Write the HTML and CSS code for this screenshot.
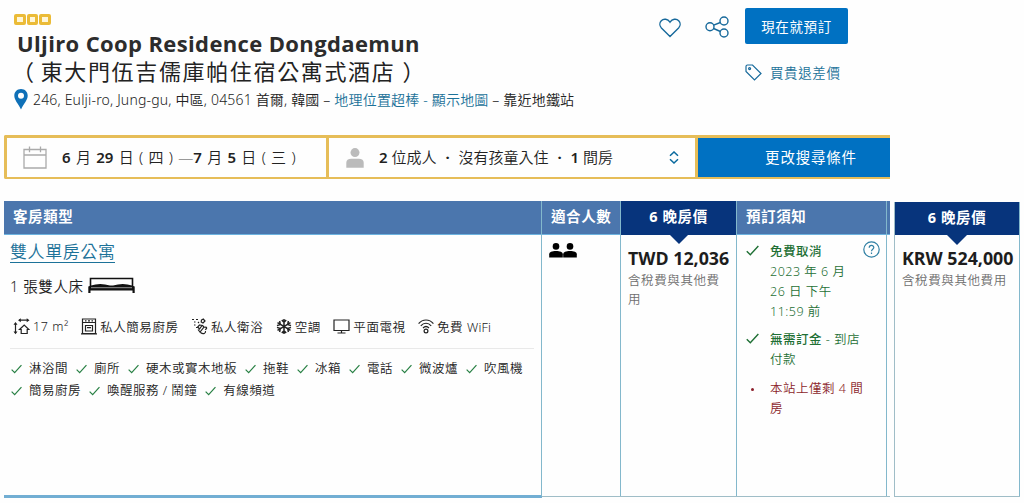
FILE: index.html
```
<!DOCTYPE html>
<html lang="zh-TW">
<head>
    <meta charset="UTF-8">
    <meta name="viewport" content="width=device-width, initial-scale=1.0">
    <title>Uljiro Coop Residence Dongdaemun</title>
    <link rel="stylesheet" href="styles.css">
</head>
<body>
    <svg width="0" height="0" class="symbols">
        <symbol id="check" viewBox="0 0 12 10"><path d="M.7 5.6 4 9 11.4.8" fill="none" stroke="currentColor" stroke-width="1.3"/></symbol>
        <symbol id="person" viewBox="0 0 14 15"><circle cx="7" cy="3.4" r="3.3"/><path d="M.2 14.6v-3.4C.2 9.2 3 8 7 8s6.800 1.200 6.800 3.200v3.400z"/></symbol>
    </svg>

    <!-- Header -->
    <header class="header">
        <div class="hotel">
            <div class="rating">
                <span></span><span></span><span></span>
            </div>
            <h1 class="hotel-name">Uljiro Coop Residence Dongdaemun</h1>
            <div class="hotel-name-zh"><span class="paren-l">（</span>東大門伍吉儒庫帕住宿公寓式酒店<span class="paren-r">）</span></div>
            <div class="address">
                <svg class="pin" width="14" height="21" viewBox="0 0 14 21"><path fill="#0f70b7" fill-rule="evenodd" d="M7 0C3 0 .3 2.900.3 6.800.3 11 4 14.500 7 20.500 10 14.500 13.700 11 13.700 6.800 13.700 2.900 11 0 7 0zm0 3.800a3 3 0 1 1 0 6 3 3 0 0 1 0-6z"/></svg>
                <span>246, Eulji-ro, Jung-gu, </span><span>中區, 04561 首爾, 韓國 – </span><a>地理位置超棒</a><a> - </a><a>顯示地圖</a><span> – 靠近地鐵站</span>
            </div>
        </div>
        <div class="actions">
            <div class="action-row">
                <svg class="heart" width="22" height="20" viewBox="0 0 22 20"><path d="M11 18.500 2.400 10C.3 7.800.5 4.600 2.300 2.700 4.700.3 8.700.9 11 4.200 13.300.9 17.300.3 19.700 2.700c1.800 1.900 2 5.100-.1 7.300z"/></svg>
                <svg class="share" width="24" height="22" viewBox="0 0 24 22"><circle cx="5" cy="10.700" r="4"/><circle cx="19" cy="5" r="4"/><circle cx="19" cy="17" r="4"/><path d="m8.700 9.200 6.600-2.700M8.600 12.500l6.800 3"/></svg>
                <button class="book-btn">現在就預訂</button>
            </div>
            <div class="price-match">
                <svg width="17" height="17" viewBox="0 0 17 17"><path d="M1 2.500Q1 1 2.500 1h5L16 9.500 9.500 16 1 7.500z"/><circle cx="4.600" cy="4.600" r="1"/></svg>
                <a>買貴退差價</a>
            </div>
        </div>
    </header>

    <!-- Search bar -->
    <div class="search">
        <div class="search-dates">
            <svg width="24" height="23" viewBox="0 0 24 23"><path d="M1 3.500h22V22H1zM1 9h22M6.500.5v5.800M17.500.5v5.800" fill="none" stroke="#aaa" stroke-width="1.300"/></svg>
            <div class="dates"><b>6</b> 月 <b>29</b> 日 ( 四 ) <i>—</i><b>7</b> 月 <b>5</b> 日 ( 三 )</div>
        </div>
        <div class="search-guests">
            <svg width="18" height="20" viewBox="0 0 18 20" fill="#bbb"><circle cx="9" cy="4.600" r="4.500"/><path d="M.3 19.800v-5q0-4 5-4h7.400q5 0 5 4v5z"/></svg>
            <div class="guests"><b>2</b> 位成人 <i>·</i> 沒有孩童入住 <i>·</i> <b>1</b> 間房</div>
            <svg class="updown" width="10" height="13" viewBox="0 0 10 13"><path d="M1 4.800 5 1l4 3.800M1 8.200 5 12l4-3.800" fill="none" stroke="#0a6a9e" stroke-width="1.500"/></svg>
        </div>
        <button class="search-btn">更改搜尋條件</button>
    </div>

    <!-- Room tables -->
    <main class="rooms">
        <div class="table">
            <div class="col col-room">
                <div class="th">客房類型</div>
                <div class="room">
                    <a class="room-name">雙人單房公寓</a>
                    <div class="beds">
                        <span>1 張雙人床</span>
                        <svg width="47" height="17" viewBox="0 0 47 17"><path d="M2.500 9V1.500h42V9" fill="none" stroke="#111" stroke-width="1.600"/><path d="M.3 9.500 3 8.500q9-3 19 0h3q10-3 19 0l2.700 1V16H44.500v-2.500H2.500V16H.3z" fill="#111"/><path d="M3 10.700h41" stroke="#ccc" stroke-width=".7"/></svg>
                    </div>
                    <div class="facilities">
                        <div class="facility">
                            <svg width="17" height="17" viewBox="0 0 17 17"><path d="M6 2.200h9M2.500 5v10M6.500 11.500l4.700-4.500 4.700 4.500h-1.700v4h-6v-4z"/><path class="solid" d="M7.800.2v4L5 2.200zM13.700.2v4l2.800-2zM.5 6.800h4L2.500 4zM.5 13.500h4l-2 2.800z"/></svg>
                            <span>17 m²</span>
                        </div>
                        <div class="facility">
                            <svg width="16" height="17" viewBox="0 0 16 17"><path d="M1.500 1h13v14.500h-13zM1.500 4.500h13M4.500 7.500h7v5.500h-7zM6 9.700h4M4 2.800h1.500M7 2.800h2M10.500 2.800H12M0 15.800h16"/></svg>
                            <span>私人簡易廚房</span>
                        </div>
                        <div class="facility">
                            <svg width="17" height="17" viewBox="0 0 17 17"><path d="M1 1.500h2M5 1.500h2M3 4h1.500M3 7h1.500M5 9.500h1.500M7 4l1 1M10.500 2l1.800-1 1.700 2-2 2-1.800-1zM8.500 7l2.500.5-2.500 3.500-1.800-2zM11.500 7.500l1.500 1.500-4 5-2-2.500M13.500 9.500c2.500-1.500 3 1.500.5 2M9.500 14.500c3 2.500 5.500.5 5-1.500"/></svg>
                            <span>私人衛浴</span>
                        </div>
                        <div class="facility">
                            <svg width="16" height="17" viewBox="0 0 16 17"><path d="M8 1v15M1.500 4.700l13 7.600M14.500 4.700l-13 7.600M5.800 2 8 4.300 10.200 2M5.800 15 8 12.700l2.200 2.300M1 7.600l3.300-1.200L3.600 3M15 9.400l-3.300 1.200.7 3.400M15 7.600l-3.300-1.200.7-3.400M1 9.400l3.300 1.200-.7 3.400" stroke-width="1.500"/></svg>
                            <span>空調</span>
                        </div>
                        <div class="facility">
                            <svg width="17" height="15" viewBox="0 0 17 15"><path d="M1 1h15v10.500H1zM8.500 11.500V14M4.500 14h8"/></svg>
                            <span>平面電視</span>
                        </div>
                        <div class="facility">
                            <svg width="16" height="15" viewBox="0 0 16 15"><path d="M.6 4.600c4-4.800 10.800-4.800 14.800 0M2.800 6.800c3-3.400 7.400-3.400 10.400 0M5 9c2-2 4-2 6 0"/><circle cx="8" cy="12" r="1.900"/></svg>
                            <span>免費 <em>WiFi</em></span>
                        </div>
                    </div>
                    <ul class="amenities">
                        <li><svg><use href="#check"/></svg>淋浴間</li>
                        <li><svg><use href="#check"/></svg>廁所</li>
                        <li><svg><use href="#check"/></svg>硬木或實木地板</li>
                        <li><svg><use href="#check"/></svg>拖鞋</li>
                        <li><svg><use href="#check"/></svg>冰箱</li>
                        <li><svg><use href="#check"/></svg>電話</li>
                        <li><svg><use href="#check"/></svg>微波爐</li>
                        <li><svg><use href="#check"/></svg>吹風機</li>
                        <li><svg><use href="#check"/></svg>簡易廚房</li>
                        <li><svg><use href="#check"/></svg>喚醒服務 / 鬧鐘</li>
                        <li><svg><use href="#check"/></svg>有線頻道</li>
                    </ul>
                </div>
            </div>
            <div class="col col-guests">
                <div class="th">適合人數</div>
                <div class="people">
                    <svg width="14" height="15"><use href="#person"/></svg>
                    <svg width="14" height="15"><use href="#person"/></svg>
                </div>
            </div>
            <div class="col col-price">
                <div class="th th-price">6 晚房價</div>
                <div class="price">TWD 12,036</div>
                <div class="tax">含稅費與其他費用</div>
            </div>
            <div class="col col-notes">
                <div class="th">預訂須知</div>
                <ul class="notes">
                    <li class="note">
                        <svg><use href="#check"/></svg>
                        <div><b>免費取消</b><br>2023 年 6 月<br>26 日 下午<br>11:59 前</div>
                        <svg class="help" viewBox="0 0 17 17"><circle cx="8.500" cy="8.500" r="7.700"/><path d="M6.200 6.700c0-3 4.600-3 4.600-.2 0 1.700-2.300 1.700-2.300 3.700M8.500 11.500V13"/></svg>
                    </li>
                    <li class="note">
                        <svg><use href="#check"/></svg>
                        <div><b>無需訂金</b> - 到店<br>付款</div>
                    </li>
                    <li class="note note-red">
                        <span class="dot"></span>
                        <div>本站上僅剩 4 間<br>房</div>
                    </li>
                </ul>
            </div>
            <div class="col col-edge"><div class="th"></div></div>
        </div>

        <div class="table table-krw">
            <div class="col col-price">
                <div class="th th-price">6 晚房價</div>
                <div class="price">KRW 524,000</div>
                <div class="tax">含稅費與其他費用</div>
            </div>
        </div>
    </main>
</body>
</html>
```
FILE: styles.css
```
* {
    box-sizing: border-box;
}

body {
    margin: 0;
    width: 1024px;
    height: 503px;
    overflow: hidden;
    background: #fefefe;
    color: #222;
    font-family: "Noto Sans", "Noto Sans CJK TC", sans-serif;
    font-size: 12.5px;
    font-weight: 350;
    white-space: nowrap;
}

svg {
    flex: none;
    display: block;
}

.symbols {
    position: absolute;
}

button {
    border: 0;
    padding: 0;
    font-family: inherit;
    color: #fff;
    background: #0071c2;
}

ul {
    list-style: none;
    margin: 0;
    padding: 0;
}

a {
    color: #1c7299;
}

/* Header */
.header {
    display: flex;
    height: 135px;
}

.hotel {
    width: 658px;
    padding: 14px 0 0 14px;
}

.rating {
    display: flex;
    gap: 1px;
    height: 11px;
}

.rating span {
    width: 11.5px;
    height: 11px;
    border: 3.5px solid #ebbb37;
    border-radius: 2px;
    background: #fff6d8;
}

.hotel-name {
    margin: 4px 0 0 3px;
    font-family: "Open Sans", sans-serif;
    font-size: 22px;
    line-height: 28px;
    letter-spacing: .37px;
    color: #2c2c2c;
}

.hotel-name-zh {
    margin-left: 4px;
    font-size: 22px;
    font-weight: 400;
    line-height: 28px;
    letter-spacing: 1.65px;
}

.paren-l {
    margin: 0 5px 0 -6px;
}

.paren-r {
    margin-left: 7px;
}

.address {
    display: flex;
    align-items: center;
    margin-top: 3px;
    height: 22px;
    font-size: 14px;
    letter-spacing: .18px;
    white-space: pre;
}

.pin {
    margin-right: 5px;
}

.actions {
    padding-top: 8px;
}

.action-row {
    display: flex;
    height: 37px;
}

.heart,
.share,
.price-match svg {
    fill: none;
    stroke: #17699b;
    stroke-width: 1.4;
}

.heart {
    margin: 10px 24px 0 1px;
}

.share {
    margin: 8px 16px 0 0;
}

.book-btn {
    width: 103px;
    height: 36px;
    border-radius: 2px;
    font-size: 13.5px;
    letter-spacing: .6px;
}

.price-match {
    display: flex;
    align-items: center;
    gap: 8px;
    margin: 16px 0 0 87px;
    height: 22px;
    font-size: 13.5px;
    letter-spacing: .6px;
}

.price-match svg {
    stroke-width: 1.2;
}

/* Search bar */
.search {
    display: flex;
    width: 886px;
    height: 44px;
    margin-left: 4px;
    border: solid #e6bd58;
    border-width: 3px 0 2px 3px;
    border-radius: 2px 0 0 2px;
    font-size: 15px;
}

.search-dates,
.search-guests {
    display: flex;
    align-items: center;
    border-right: 3px solid #e6bd58;
}

.search-dates {
    width: 322px;
    padding-left: 16px;
}

.search-guests {
    width: 369px;
    padding: 0 16px 0 17px;
}

.search b {
    font-weight: 600;
}

.dates,
.guests {
    margin: -2px 0 0 15px;
}

.dates {
    word-spacing: 1.4px;
}

.search i {
    font-style: normal;
}

.dates i {
    color: #999;
}

.guests i {
    margin: 0 5px;
    font-weight: 700;
}

.updown {
    margin-left: auto;
}

.search-btn {
    flex: 1;
    padding: 0 0 2px 34px;
    font-size: 14.5px;
    letter-spacing: .8px;
}

/* Room tables */
.rooms {
    display: flex;
    align-items: flex-start;
    gap: 4px;
    padding: 22px 0 0 4px;
}

.table {
    display: flex;
    height: 296px;
    border-bottom: 1px solid #9fbdc7;
}

.col {
    border-right: 1px solid #83b8cc;
}

.th {
    height: 34px;
    padding-left: 9px;
    border-bottom: 1px solid #6db3df;
    background: #4b76ad;
    color: #fff;
    font-size: 14.5px;
    font-weight: 700;
    line-height: 31px;
    letter-spacing: .6px;
}

.th-price {
    position: relative;
    padding: 0;
    border-bottom-color: #07357c;
    background: #07347c;
    text-align: center;
}

/* notch below the price header */
.th-price::after {
    content: "";
    position: absolute;
    top: 33px;
    left: 50%;
    margin-left: -10px;
    border: 10px solid transparent;
    border-top-color: #07347c;
    border-bottom: 0;
}

.col-room {
    width: 538px;
    height: 297px;
    border-bottom: 3px solid #72aed3;
}

.col-guests {
    width: 79px;
}

.col-price {
    width: 116px;
}

.col-notes {
    width: 150px;
}

.col-edge {
    width: 3px;
    border-right: 0;
}

.col-edge .th {
    padding: 0;
}

.room {
    padding: 4px 7px 0 6px;
}

.room-name {
    display: block;
    width: 105px;
    height: 24px;
    border-bottom: 1.5px solid #1c7299;
    font-size: 17px;
    line-height: 26px;
    letter-spacing: .6px;
}

.beds {
    display: flex;
    align-items: center;
    gap: 4px;
    height: 24px;
    margin-top: 10px;
    font-size: 14.5px;
    letter-spacing: .6px;
}

.facilities {
    display: flex;
    align-items: center;
    height: 42px;
    margin: 10px 0 9px;
    padding: 0 0 2px 3px;
    border-bottom: 1px solid #e9e9e9;
    letter-spacing: .55px;
}

.facility {
    display: flex;
    align-items: center;
    gap: 3px;
    margin-right: 12.5px;
}

.facility em {
    font-style: normal;
    letter-spacing: .2px;
}

.facility svg {
    fill: none;
    stroke: #222;
    stroke-width: 1.2;
}

.facility .solid {
    fill: #222;
    stroke: none;
}

.amenities {
    display: flex;
    flex-wrap: wrap;
    padding-left: 1px;
    line-height: 22px;
    letter-spacing: .5px;
}

.amenities li {
    display: flex;
    align-items: center;
    margin-right: 8px;
}

.amenities svg {
    width: 11px;
    height: 10px;
    margin: 0 7px 0 0;
    color: #288044;
}

.people {
    display: flex;
    padding: 8px 0 0 7px;
}

.price {
    margin: 11px 0 0 7px;
    color: #1d1d1d;
    font-family: "Open Sans", sans-serif;
    font-size: 17.8px;
    font-weight: 700;
    line-height: 24px;
}

.tax {
    margin: 1px 10px 0 7px;
    color: #6f6f6f;
    line-height: 19px;
    letter-spacing: .6px;
    white-space: normal;
}

.notes {
    padding: 7px 0 0 9px;
    color: #1f7035;
    line-height: 20px;
    letter-spacing: .5px;
}

.note {
    display: flex;
    margin-bottom: 8px;
}

.note b {
    font-weight: 500;
}

.note svg {
    width: 13px;
    height: 11px;
    margin: 3px 11px 0 0;
}

.note .help {
    width: 17px;
    height: 17px;
    margin: -1px 6px 0 auto;
    fill: none;
    stroke: #2f7fa3;
    stroke-width: 1.2;
}

.note-red {
    margin-top: 9px;
    color: #8c1f2b;
}

.dot {
    width: 3px;
    height: 3px;
    margin: 9px 16px 0 5px;
    border-radius: 50%;
    background: #8c1f2b;
}

.table-krw {
    height: 295px;
    margin-top: 1px;
    border-left: 1px solid #9fbdc7;
}

.table-krw .col-price {
    width: 125px;
}

.table-krw .th-price {
    height: 33px;
}

.table-krw .tax {
    white-space: nowrap;
}
```
